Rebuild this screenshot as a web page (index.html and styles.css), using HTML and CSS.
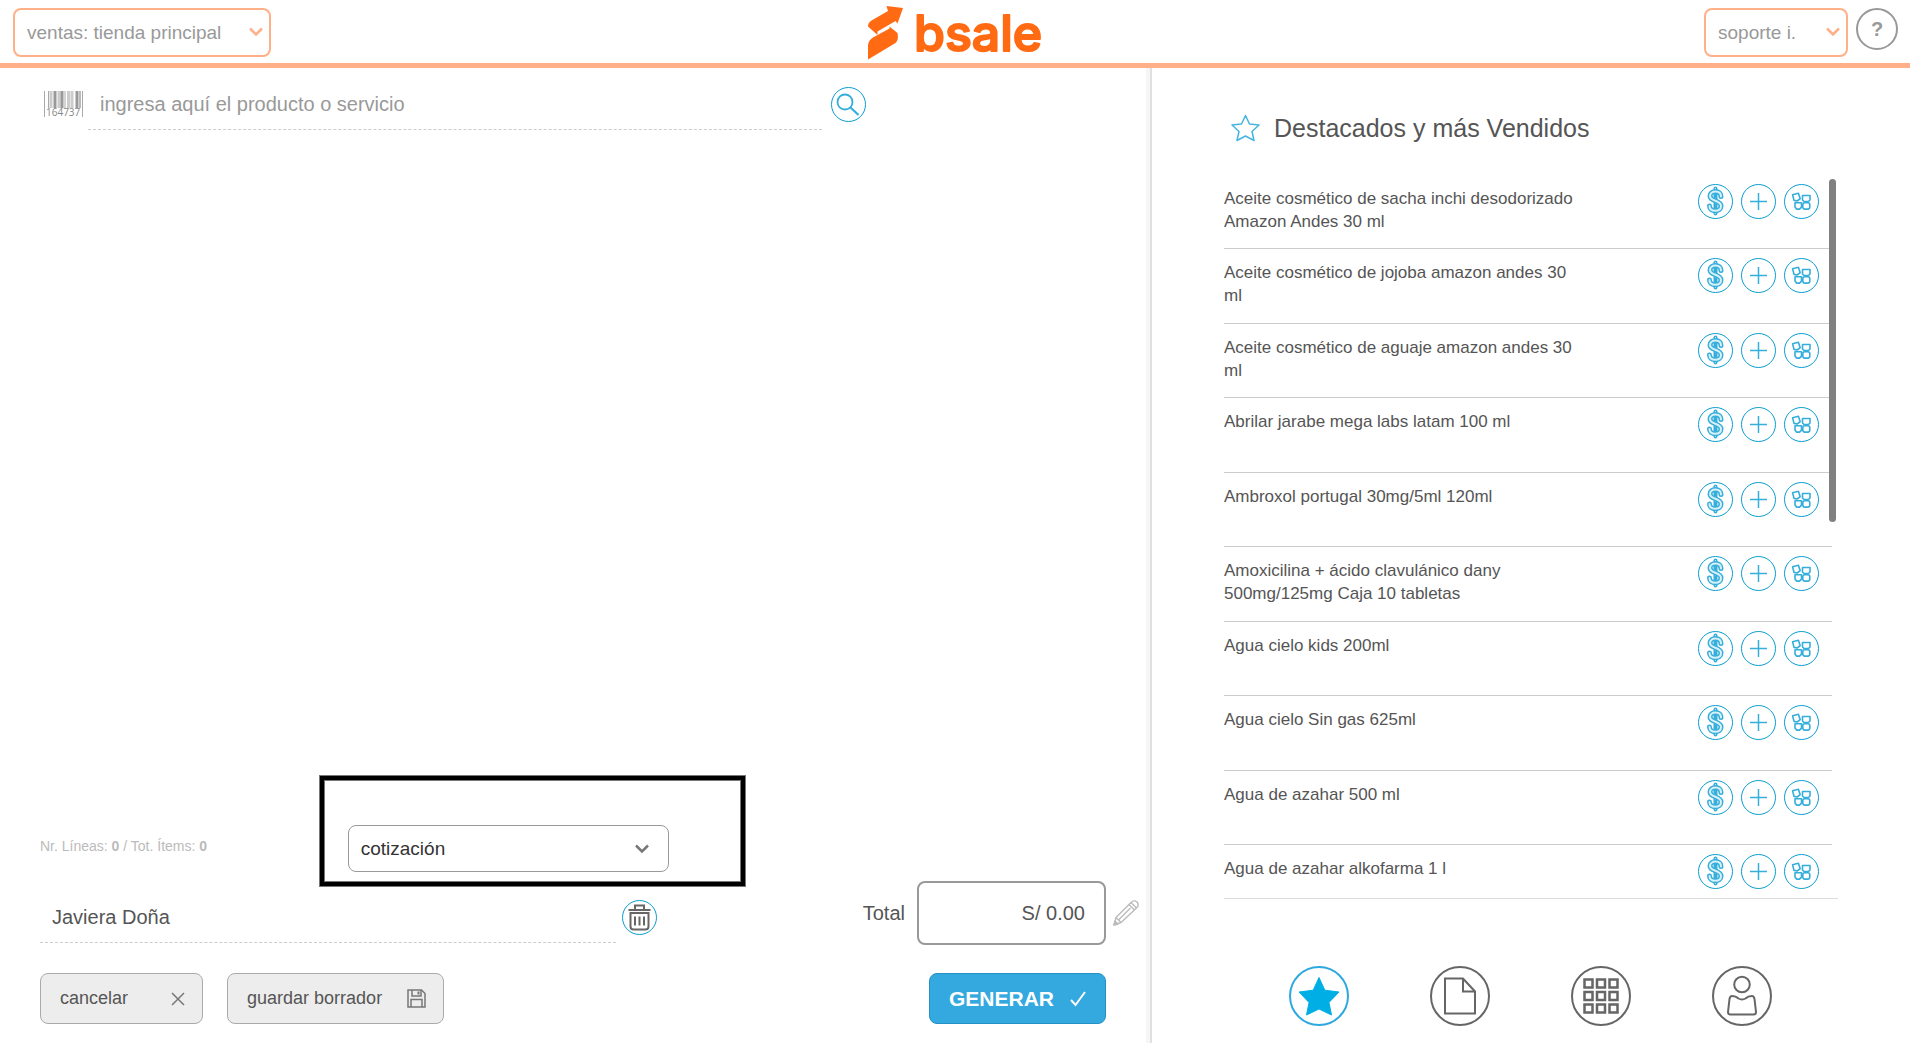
FILE: index.html
```html
<!DOCTYPE html>
<html lang="es">

<head>
    <meta charset="UTF-8">
    <meta name="viewport" content="width=device-width, initial-scale=1.0">
    <title>bsale - ventas</title>
    <link rel="stylesheet" href="styles.css">
</head>

<body>
    <!-- iconos compartidos -->
    <svg class="sprite" aria-hidden="true">
        <symbol id="chevron" viewBox="0 0 14 10">
            <path d="M1 1.500 7 7.500l6-6" fill="none" stroke="currentColor" stroke-width="2.500" />
        </symbol>
        <symbol id="dollar" viewBox="0 0 33 33">
            <g fill="none" stroke-linecap="round" stroke-linejoin="round">
                <path d="M16.500 3.500v25" stroke="#35aedb" stroke-width="4" />
                <path d="M16.500 3.500v25" stroke="#d8f0f8" stroke-width="1" />
                <path d="M22 11.500c0-3.500-2.500-5-5.500-5s-5.500 1.700-5.500 4.500c0 6 11 3.500 11 10 0 3.200-2.500 4.800-5.700 4.800s-5.700-1.700-5.800-4.800" stroke="#35aedb" stroke-width="5" />
                <path d="M22 11.500c0-3.500-2.500-5-5.500-5s-5.500 1.700-5.500 4.500c0 6 11 3.500 11 10 0 3.200-2.500 4.800-5.700 4.800s-5.700-1.700-5.800-4.800" stroke="#d8f0f8" stroke-width="2" />
                <path d="M16.500 9v4M16.500 19v4" stroke="#35aedb" stroke-width="1.500" />
            </g>
        </symbol>
        <symbol id="plus" viewBox="0 0 33 33">
            <path d="M16.500 8v17M8 16.500h17" fill="none" stroke="#35aedb" stroke-width="1.500" />
        </symbol>
        <symbol id="blocks" viewBox="0 0 33 33">
            <g fill="none" stroke="#35aedb" stroke-width="1.600" stroke-linejoin="round">
                <path d="M7.600 9.800l5.800-1.600 1.800 5.500-3 2.300-3.200-.6z" />
                <path d="M17.500 10.500h7.500v4.500l-1.500 1.500h-4.500l-1.500-1.500z" />
                <path d="M10 17.800h6.500v4.400l-2 1.900h-3l-1.500-2z" />
                <rect x="17.800" y="17.800" width="7" height="6.300" rx="2" />
            </g>
        </symbol>
    </svg>

    <header class="header">
        <div class="select-box select-store">
            <select aria-label="Tienda">
                <option>ventas: tienda principal</option>
            </select>
            <svg><use href="#chevron" /></svg>
        </div>
        <a class="logo" href="#" aria-label="bsale">
            <svg viewBox="0 0 178 54">
                <path d="M1 20.500Q1 16.500 4.500 14.500L21 5 19.500 0 36 2 30.500 17.500 28.500 15 10.500 25.500V29z" fill="#ff6a13" />
                <path d="M1 53.500V39.500Q1.500 34 6 31.500L22.500 22.500 22.500 20.500 30.500 27Q32 34 28.500 37z" fill="#ff6a13" />
                <text class="logo-text" x="47" y="45">bsale</text>
            </svg>
        </a>
        <div class="user">
            <div class="select-box select-user">
                <select aria-label="Usuario">
                    <option>soporte i.</option>
                </select>
                <svg><use href="#chevron" /></svg>
            </div>
            <button class="help" type="button">?</button>
        </div>
    </header>

    <main class="main">
        <section class="sale">
            <div class="search">
                <svg class="barcode" viewBox="0 0 39 27">
                    <path d="M.5 0v26M38.500 0v26M4.500 0v17M21 0v17" stroke="#aaa" />
                    <path d="M7 0v17M15 0v17M24.500 0v17M28 0v17" stroke="#ccc" stroke-width="3" />
                    <path d="M11 0v17M18 0v17M33 0v17" stroke="#999" stroke-width="3" />
                    <path d="M36 0v17" stroke="#bbb" stroke-width="2" />
                    <text x="2" y="25">164737</text>
                </svg>
                <input type="text" aria-label="Producto o servicio" placeholder="ingresa aquí el producto o servicio">
                <button class="circle" type="button" aria-label="Buscar">
                    <svg viewBox="0 0 33 33" fill="none" stroke="#35aedb">
                        <circle cx="13" cy="14" r="7.500" stroke-width="1.800" />
                        <path d="M18.500 19.500l8 7.500" stroke-width="2.200" />
                    </svg>
                </button>
            </div>

            <div class="cart"></div>

            <div class="summary">
                <p>Nr. Líneas: <b>0</b> / Tot. Ítems: <b>0</b></p>
                <div class="select-box select-doc">
                    <select aria-label="Documento">
                        <option>cotización</option>
                    </select>
                    <svg><use href="#chevron" /></svg>
                </div>
            </div>

            <div class="client-row">
                <div class="client">
                    <input type="text" aria-label="Cliente" value="Javiera Doña">
                    <button class="circle" type="button" aria-label="Quitar cliente">
                        <svg viewBox="0 0 33 33" fill="none" stroke="#666" stroke-width="2">
                            <path d="M5.500 9h22" />
                            <path d="M12 8V4.500h9V8" />
                            <path d="M7.500 12h18v13.500q0 3-3 3h-12q-3 0-3-3z" />
                            <path d="M12 15.500v9M16.500 15.500v9M21 15.500v9" />
                        </svg>
                    </button>
                </div>
                <div class="total">
                    <label for="total">Total</label>
                    <input id="total" type="text" value="S/ 0.00" readonly>
                    <button class="edit" type="button" aria-label="Editar total">
                        <svg viewBox="0 0 26 26" fill="none" stroke="#bbb" stroke-width="1.400" stroke-linejoin="round">
                            <path d="M1 25l2-7.500L18 2.500q3-3 6-.5 2.500 3-.5 6L8 22.500z" />
                            <path d="M3 17.500l5 5M16 4.500l5.500 5.500M18 2.500l5.500 5.500M6 19.500L17.500 8" />
                            <path d="M1 25l1-4 3 3z" fill="#bbb" />
                        </svg>
                    </button>
                </div>
            </div>

            <div class="actions">
                <button class="btn" type="button">cancelar
                    <svg class="icon-close" viewBox="0 0 14 14"><path d="M1 1l12 12M13 1L1 13" stroke="#777" stroke-width="1.500" /></svg>
                </button>
                <button class="btn" type="button">guardar borrador
                    <svg class="icon-save" viewBox="0 0 19 19" fill="none" stroke="#777" stroke-width="1.500">
                        <path d="M1 1h13.500L18 4.500V18H1z" />
                        <path d="M5 1v6h9V1M4 18v-7.500h11V18" />
                        <path d="M11.500 2.500v3" stroke-width="2" />
                    </svg>
                </button>
                <button class="btn btn-primary" type="button">GENERAR
                    <svg class="icon-check" viewBox="0 0 16 16"><path d="M1 9l4.500 5L15 1" fill="none" stroke="#fff" stroke-width="2" /></svg>
                </button>
            </div>
        </section>

        <aside class="side">
            <h2>
                <svg viewBox="0 0 29 28"><path d="M14.500 1.500l4 8.500 9.500 1-7 6.500 2 9-8.500-4.500-8.500 4.500 2-9-7-6.500 9.500-1z" fill="none" stroke="#45b4e0" stroke-width="1.500" stroke-linejoin="round" /></svg>
                Destacados y más Vendidos
            </h2>

            <div class="list">
                <ul>
                    <li>
                        <span>Aceite cosmético de sacha inchi desodorizado Amazon Andes 30 ml</span>
                        <button class="circle" type="button" aria-label="Precio"><svg><use href="#dollar" /></svg></button>
                        <button class="circle" type="button" aria-label="Agregar"><svg><use href="#plus" /></svg></button>
                        <button class="circle" type="button" aria-label="Stock"><svg><use href="#blocks" /></svg></button>
                    </li>
                    <li>
                        <span>Aceite cosmético de jojoba amazon andes 30 ml</span>
                        <button class="circle" type="button" aria-label="Precio"><svg><use href="#dollar" /></svg></button>
                        <button class="circle" type="button" aria-label="Agregar"><svg><use href="#plus" /></svg></button>
                        <button class="circle" type="button" aria-label="Stock"><svg><use href="#blocks" /></svg></button>
                    </li>
                    <li>
                        <span>Aceite cosmético de aguaje amazon andes 30 ml</span>
                        <button class="circle" type="button" aria-label="Precio"><svg><use href="#dollar" /></svg></button>
                        <button class="circle" type="button" aria-label="Agregar"><svg><use href="#plus" /></svg></button>
                        <button class="circle" type="button" aria-label="Stock"><svg><use href="#blocks" /></svg></button>
                    </li>
                    <li>
                        <span>Abrilar jarabe mega labs latam 100 ml</span>
                        <button class="circle" type="button" aria-label="Precio"><svg><use href="#dollar" /></svg></button>
                        <button class="circle" type="button" aria-label="Agregar"><svg><use href="#plus" /></svg></button>
                        <button class="circle" type="button" aria-label="Stock"><svg><use href="#blocks" /></svg></button>
                    </li>
                    <li>
                        <span>Ambroxol portugal 30mg/5ml 120ml</span>
                        <button class="circle" type="button" aria-label="Precio"><svg><use href="#dollar" /></svg></button>
                        <button class="circle" type="button" aria-label="Agregar"><svg><use href="#plus" /></svg></button>
                        <button class="circle" type="button" aria-label="Stock"><svg><use href="#blocks" /></svg></button>
                    </li>
                    <li>
                        <span>Amoxicilina + ácido clavulánico dany 500mg/125mg Caja 10 tabletas</span>
                        <button class="circle" type="button" aria-label="Precio"><svg><use href="#dollar" /></svg></button>
                        <button class="circle" type="button" aria-label="Agregar"><svg><use href="#plus" /></svg></button>
                        <button class="circle" type="button" aria-label="Stock"><svg><use href="#blocks" /></svg></button>
                    </li>
                    <li>
                        <span>Agua cielo kids 200ml</span>
                        <button class="circle" type="button" aria-label="Precio"><svg><use href="#dollar" /></svg></button>
                        <button class="circle" type="button" aria-label="Agregar"><svg><use href="#plus" /></svg></button>
                        <button class="circle" type="button" aria-label="Stock"><svg><use href="#blocks" /></svg></button>
                    </li>
                    <li>
                        <span>Agua cielo Sin gas 625ml</span>
                        <button class="circle" type="button" aria-label="Precio"><svg><use href="#dollar" /></svg></button>
                        <button class="circle" type="button" aria-label="Agregar"><svg><use href="#plus" /></svg></button>
                        <button class="circle" type="button" aria-label="Stock"><svg><use href="#blocks" /></svg></button>
                    </li>
                    <li>
                        <span>Agua de azahar 500 ml</span>
                        <button class="circle" type="button" aria-label="Precio"><svg><use href="#dollar" /></svg></button>
                        <button class="circle" type="button" aria-label="Agregar"><svg><use href="#plus" /></svg></button>
                        <button class="circle" type="button" aria-label="Stock"><svg><use href="#blocks" /></svg></button>
                    </li>
                    <li>
                        <span>Agua de azahar alkofarma 1 l</span>
                        <button class="circle" type="button" aria-label="Precio"><svg><use href="#dollar" /></svg></button>
                        <button class="circle" type="button" aria-label="Agregar"><svg><use href="#plus" /></svg></button>
                        <button class="circle" type="button" aria-label="Stock"><svg><use href="#blocks" /></svg></button>
                    </li>
                </ul>
                <div class="scrollbar"></div>
            </div>

            <nav class="tabs">
                <button class="active" type="button" aria-label="Destacados">
                    <svg viewBox="0 0 60 60"><path d="M30 11.500l5.800 12.700L50 26 40 36.500l2.500 12.500L30 43l-12.500 6L20 36.500 10 26l14.200-1.800z" fill="#00aee6" stroke="#00aee6" stroke-width="1" stroke-linejoin="round" /></svg>
                </button>
                <button type="button" aria-label="Documentos">
                    <svg viewBox="0 0 60 60" fill="none" stroke="#666" stroke-width="2"><path d="M15 12.500h18l12 13v22H15z" /><path d="M33 12.500v13h12" /></svg>
                </button>
                <button type="button" aria-label="Categorías">
                    <svg viewBox="0 0 60 60" fill="none" stroke="#666" stroke-width="2.500">
                        <path d="M13.500 13.500h8v8h-8zM26 13.500h8v8h-8zM38.500 13.500h8v8h-8zM13.500 26h8v8h-8zM26 26h8v8h-8zM38.500 26h8v8h-8zM13.500 38.500h8v8h-8zM26 38.500h8v8h-8zM38.500 38.500h8v8h-8z" />
                    </svg>
                </button>
                <button type="button" aria-label="Clientes">
                    <svg viewBox="0 0 60 60" fill="none" stroke="#666" stroke-width="2" stroke-linejoin="round">
                        <circle cx="30" cy="18.500" r="7.800" />
                        <path d="M20 30q4 0 6.500 2.500 3.500 2 7 0 2.500-2.500 6.500-2.500 2 0 2.500 3l1.500 13q0 2.500-2.500 2.500H18.500q-2.500 0-2.500-2.500l1.500-13q.5-3 2.500-3z" />
                    </svg>
                </button>
            </nav>
        </aside>
    </main>
</body>

</html>
```
FILE: styles.css
```css
* {
    box-sizing: border-box;
}

body {
    margin: 0;
    height: 100vh;
    display: flex;
    flex-direction: column;
    font-family: "Liberation Sans", Arial, sans-serif;
    font-size: 20px;
    color: #555;
    background-color: #fff;
}

button,
input,
select {
    font-family: inherit;
    font-size: inherit;
    color: inherit;
}

button {
    padding: 0;
    background-color: #fff;
    cursor: pointer;
}

svg {
    display: block;
}

.sprite {
    display: none;
}

/* Header */
.header {
    display: grid;
    grid-template-columns: 1fr auto 1fr;
    align-items: center;
    height: 68px;
    padding: 2px 12px 0 13px;
    border-bottom: 5px solid #ffb088;
}

.select-box {
    position: relative;
}

.select-box select {
    appearance: none;
    display: block;
    width: 100%;
    height: 49px;
    padding: 0 12px;
    border: 2px solid #ffb088;
    border-radius: 8px;
    background-color: #fff;
    color: #999;
    font-size: 19px;
}

.select-box svg {
    position: absolute;
    top: 19px;
    right: 8px;
    width: 14px;
    height: 10px;
    color: #ffb088;
    pointer-events: none;
}

.select-store {
    width: 258px;
}

.select-user {
    width: 144px;
}

.logo svg {
    width: 178px;
    height: 54px;
    overflow: visible;
}

.logo-text {
    font-family: Inter, sans-serif;
    font-size: 50px;
    font-weight: 500;
    fill: #ff6a13;
    stroke: #ff6a13;
    stroke-width: 2;
    stroke-linejoin: round;
}

.user {
    display: flex;
    justify-content: flex-end;
    gap: 8px;
}

.help {
    width: 42px;
    height: 42px;
    border: 2px solid #999;
    border-radius: 50%;
    color: #999;
    font-weight: bold;
}

/* Layout */
.main {
    flex: 1;
    min-height: 0;
    display: grid;
    grid-template-columns: 3fr 2fr;
    grid-template-rows: minmax(0, 1fr);
}

.sale {
    display: flex;
    flex-direction: column;
    padding: 11px 7px 19px 40px;
}

.circle {
    flex: none;
    width: 35px;
    height: 35px;
    border: 1px solid #0a9dd0;
    border-radius: 50%;
}

.circle svg {
    width: 33px;
    height: 33px;
}

/* Search */
.search {
    display: flex;
    align-items: center;
    padding-left: 4px;
}

.search input,
.client input {
    height: 51px;
    padding: 0 12px;
    border: none;
    border-bottom: 1px dashed #ccc;
    background: none;
    outline: none;
}

.search input {
    width: 67%;
    margin: 0 9px 0 5px;
}

.search input::placeholder {
    color: #999;
}

.barcode {
    width: 39px;
    height: 27px;
    overflow: visible;
}

.barcode text {
    font-family: "Open Sans", sans-serif;
    font-size: 10px;
    fill: #888;
}

.cart {
    flex: 1;
}

/* Summary */
.summary {
    display: flex;
    align-items: center;
}

.summary p {
    width: 28%;
    margin: 0;
    padding-bottom: 6px;
    font-size: 14px;
    color: #bbb;
}

.select-doc {
    width: 321px;
}

.select-doc::before {
    content: "";
    position: absolute;
    top: -49px;
    right: -76px;
    bottom: -14px;
    left: -28px;
    border: 4px solid #000;
    outline: 1px solid #777;
    box-shadow: inset 0 0 0 1px #777;
    pointer-events: none;
}

.select-doc select {
    height: 47px;
    border: 1px solid #999;
    color: #333;
}

.select-doc svg {
    right: 20px;
    color: #777;
}

/* Client and total */
.client-row {
    display: flex;
    align-items: flex-end;
    justify-content: space-between;
    margin-top: 9px;
}

.client {
    flex: 1;
    display: flex;
    align-items: center;
    gap: 6px;
    margin-bottom: 2px;
}

.client input {
    width: 70%;
}

.total {
    display: flex;
    align-items: center;
}

.total input {
    width: 189px;
    height: 64px;
    margin: 0 7px 0 12px;
    padding: 0 19px;
    border: 2px solid #999;
    border-radius: 8px;
    text-align: right;
}

.edit {
    border: none;
}

.edit svg {
    width: 26px;
    height: 26px;
}

/* Buttons */
.actions {
    display: flex;
    align-items: center;
    gap: 24px;
    margin-top: 28px;
    padding-right: 33px;
}

.btn {
    display: flex;
    align-items: center;
    justify-content: space-between;
    gap: 25px;
    height: 51px;
    padding: 0 17px 0 19px;
    border: 1px solid #aaa;
    border-radius: 8px;
    background-color: #ededed;
    font-size: 18px;
}

.icon-close {
    width: 14px;
    height: 14px;
    margin-left: 18px;
}

.icon-save {
    width: 19px;
    height: 19px;
}

.icon-check {
    width: 16px;
    height: 16px;
}

.btn-primary {
    gap: 16px;
    margin-left: auto;
    padding: 0 19px;
    border-color: #2490c4;
    background-color: #33a9df;
    color: #fff;
    font-size: 21px;
    font-weight: bold;
}

/* Side panel */
.side {
    display: flex;
    flex-direction: column;
    min-height: 0;
    padding: 46px 72px 17px 74px;
    border-left: 4px solid #f5f6f8;
    box-shadow: inset 2px 0 #e0e0e0;
}

.side h2 {
    display: flex;
    align-items: center;
    gap: 14px;
    height: 28px;
    margin: 0 0 33px;
    padding-left: 7px;
    font-size: 25px;
    font-weight: normal;
}

.side h2 svg {
    width: 29px;
    height: 28px;
}

.list {
    position: relative;
    flex: 1;
    min-height: 0;
    overflow: hidden;
    border-bottom: 1px solid #ddd;
}

.list ul {
    margin: 0 6px 0 0;
    padding: 0;
    list-style: none;
}

.list li {
    display: flex;
    align-items: flex-start;
    gap: 8px;
    height: 74px;
    padding: 9px 13px 0 0;
    border-bottom: 1px solid #ccc;
}

.list li:nth-child(even) {
    height: 75px;
}

.list span {
    width: 60%;
    margin-right: auto;
    padding-top: 3px;
    font-size: 17px;
    line-height: 23px;
}

.scrollbar {
    position: absolute;
    top: 4px;
    right: 2px;
    width: 7px;
    height: 343px;
    border-radius: 4px;
    background-color: #808080;
}

.tabs {
    display: flex;
    justify-content: center;
    gap: 81px;
    margin-top: 67px;
    padding-right: 2px;
}

.tabs button {
    width: 60px;
    height: 60px;
    border: 2px solid #666;
    border-radius: 50%;
}

.tabs .active {
    border-color: #2fa8df;
}

.tabs svg {
    width: 60px;
    height: 60px;
    margin: -2px;
}
```
